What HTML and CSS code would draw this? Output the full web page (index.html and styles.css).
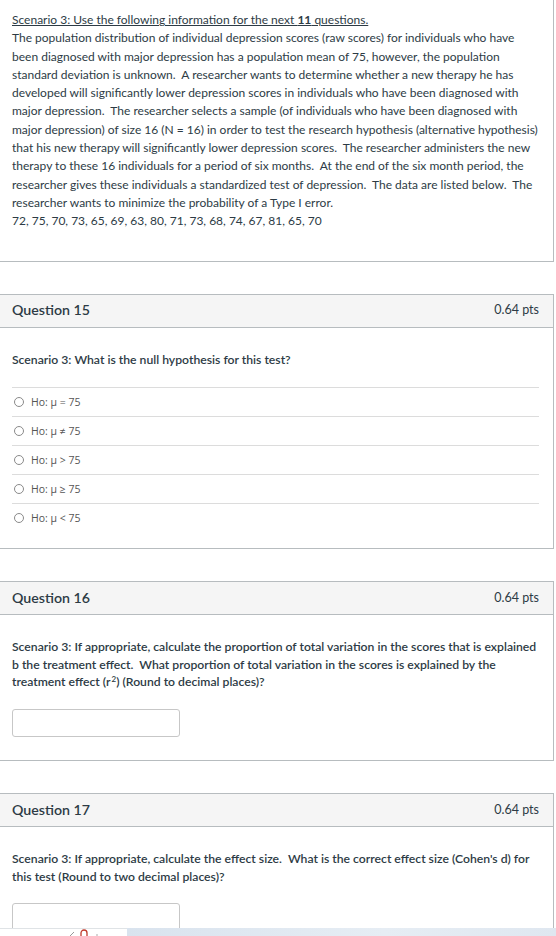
FILE: index.html
```html
<!DOCTYPE html>
<html>
<head>
<meta charset="utf-8">
<link rel="stylesheet" href="styles.css">
</head>
<body>
<div class="page">
  <section class="card intro">
    <p class="lead"><u>Scenario 3: Use the following information for the next <b>11</b> questions. </u></p>
    <p>The population distribution of individual depression scores (raw scores) for individuals who have been diagnosed with major depression has a population mean of 75, however, the population standard deviation is unknown.&nbsp; A researcher wants to determine whether a new therapy he has developed will significantly lower depression scores in individuals who have been diagnosed with major depression.&nbsp; The researcher selects a sample (of individuals who have been diagnosed with major depression) of size 16 (N = 16) in order to test the research hypothesis (alternative hypothesis) that his new therapy will significantly lower depression scores.&nbsp; The researcher administers the new therapy to these 16 individuals for a period of six months.&nbsp; At the end of the six month period, the researcher gives these individuals a standardized test of depression.&nbsp; The data are listed below.&nbsp; The researcher wants to minimize the probability of a Type I error.</p>
    <p>72, 75, 70, 73, 65, 69, 63, 80, 71, 73, 68, 74, 67, 81, 65, 70</p>
  </section>

  <section class="card question">
    <header class="qhead"><span class="qname">Question 15</span><span class="pts">0.64 pts</span></header>
    <div class="qbody">
      <p class="qtext">Scenario 3: What is the null hypothesis for this test?</p>
      <ul class="answers">
        <li><span class="radio"></span><span>Ho: μ = 75</span></li>
        <li><span class="radio"></span><span>Ho: μ ≠ 75</span></li>
        <li><span class="radio"></span><span>Ho: μ &gt; 75</span></li>
        <li><span class="radio"></span><span>Ho: μ ≥ 75</span></li>
        <li><span class="radio"></span><span>Ho: μ &lt; 75</span></li>
      </ul>
    </div>
  </section>

  <section class="card question">
    <header class="qhead"><span class="qname">Question 16</span><span class="pts">0.64 pts</span></header>
    <div class="qbody">
      <p class="qtext">Scenario 3: If appropriate, calculate the proportion of total variation in the scores that is explained b the treatment effect.&nbsp; What proportion of total variation in the scores is explained by the treatment effect (r<sup>2</sup>) (Round to decimal places)?</p>
      <div class="field"></div>
    </div>
  </section>

  <section class="card question">
    <header class="qhead"><span class="qname">Question 17</span><span class="pts">0.64 pts</span></header>
    <div class="qbody">
      <p class="qtext">Scenario 3: If appropriate, calculate the effect size.&nbsp; What is the correct effect size (Cohen's d) for this test (Round to two decimal places)?</p>
      <div class="field"></div>
    </div>
  </section>
</div>

<div class="taskbar">
  <div class="tab">
    <svg class="tb-icons" width="60" height="8" viewBox="0 0 60 8">
      <path d="M20 8 L24 4" stroke="#999" stroke-width="1" fill="none"/>
      <path d="M31 8 V5 a3 3 0 0 1 6 0 V8" stroke="#c0392b" stroke-width="1.3" fill="none"/>
      <path d="M46 7 h2" stroke="#aaa" stroke-width="1"/>
    </svg>
  </div>
  <div class="band"></div>
</div>
</body>
</html>
```

FILE: styles.css
```css
html, body {
  margin: 0;
  padding: 0;
  background: #ffffff;
}

body {
  font-family: Lato, "Open Sans", "Liberation Sans", sans-serif;
  color: #2d3b45;
  font-size: 12px;
  line-height: 18.3px;
}

.page {
  display: flex;
  flex-direction: column;
  gap: 32px;
  margin-top: -8px;
  padding-bottom: 40px;
}

.card {
  box-sizing: border-box;
  width: 555px;
  margin-left: -1px;
  border: 1px solid #b7bcbf;
  background: #fff;
}

.intro {
  padding: 18px 10px 30px 12px;
}

.intro p {
  margin: 0;
}

.question {
  display: flex;
  flex-direction: column;
}

.qhead {
  display: flex;
  justify-content: space-between;
  align-items: center;
  height: 32px;
  padding: 0 14px 0 12px;
  background: #f5f5f5;
  border-bottom: 1px solid #b7bcbf;
}

.qname {
  font-size: 14.2px;
  font-weight: 600;
  color: #2d3b45;
}

.pts {
  font-size: 12.5px;
  color: #2d3b45;
}

.qbody {
  padding: 23px 10px 16px 12px;
}

.qtext {
  margin: 0;
  font-weight: 600;
  font-size: 12.2px;
  line-height: 17.6px;
}

.qtext sup {
  font-size: 8px;
  line-height: 1;
  vertical-align: 4px;
  margin-left: 1px;
}

.answers {
  list-style: none;
  margin: 19px 4px 0 0;
  padding: 0;
}

.answers li {
  display: flex;
  align-items: center;
  gap: 7px;
  height: 28px;
  border-top: 1px solid #dcdcdc;
  padding-left: 2px;
  font-family: "Open Sans", "Liberation Sans", sans-serif;
  font-size: 10.5px;
  color: #555;
}

.radio {
  box-sizing: border-box;
  width: 10px;
  height: 10px;
  border: 1px solid #8a8a8a;
  border-radius: 50%;
  background: #fff;
}

.field {
  box-sizing: border-box;
  width: 168px;
  height: 28px;
  margin-top: 18px;
  margin-bottom: 7px;
  border: 1px solid #c7c7c7;
  border-radius: 3px;
  background: #fff;
}

.taskbar {
  position: fixed;
  left: 0;
  right: 0;
  bottom: 0;
  height: 8px;
  display: flex;
}

.tab {
  width: 127px;
  height: 8px;
  background: #fff;
  border-top: 1px solid #dfe3e6;
  box-sizing: border-box;
  display: flex;
  align-items: flex-end;
}

.tb-icons {
  margin-left: 50px;
}

.band {
  flex: 1;
  background: linear-gradient(90deg, #d9e3ee, #e6edf4 60%, #dfe7f0);
}
```
